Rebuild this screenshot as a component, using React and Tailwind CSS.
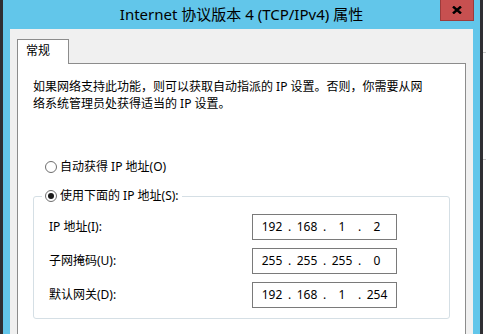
export default function App() {
  const rows = [
    { label: "IP 地址(I):", parts: ["192", "168", "1", "2"] },
    { label: "子网掩码(U):", parts: ["255", "255", "255", "0"] },
    { label: "默认网关(D):", parts: ["192", "168", "1", "254"] },
  ];

  return (
    <div className="w-[486px] h-[334px] overflow-hidden flex bg-white text-black font-['Noto_Sans','Noto_Sans_CJK_SC',sans-serif]">
      <div className="w-[3px] shrink-0 bg-[#2f2f33]" />

      <div className="w-[477px] shrink-0 flex flex-col bg-[#62c6ea]">
        {/* title bar */}
        <div className="relative h-[29px] shrink-0 flex items-center justify-center text-[15px] leading-none">
          <span>Internet 协议版本 4 (TCP/IPv4) 属性</span>
          <div className="absolute top-0 right-[6px] w-[34px] h-[21px] bg-[#c75050] border border-t-0 border-[#9c3b3b] flex items-center justify-center">
            <svg width="10" height="8" viewBox="0 0 10 8">
              <path d="M1 0.5 L9 7.5 M9 0.5 L1 7.5" stroke="#000" strokeWidth="2.4" />
            </svg>
          </div>
        </div>

        {/* dialog body */}
        <div className="mx-[7px] flex-1 bg-[#f0f0f0] pt-[10px] px-[7px] flex flex-col">
          <div className="relative z-10 w-[52px] h-[25px] -mb-px bg-white border border-b-0 border-[#8c8c8c] pl-[8px] pt-[3px] text-[12px] leading-[16px]">
            常规
          </div>

          <div className="h-[300px] bg-white border border-[#8c8c8c] px-[15px] pt-[14px] text-[12px]">
            <p className="leading-[17px] whitespace-nowrap">
              如果网络支持此功能，则可以获取自动指派的 IP 设置。否则，你需要从网
              <br />
              络系统管理员处获得适当的 IP 设置。
            </p>

            <div className="mt-[47px] pl-[12px] flex items-center gap-[3px] leading-[16px]">
              <span className="w-[12px] h-[12px] rounded-full border border-[#6e6e6e] bg-white" />
              <span>自动获得 IP 地址(O)</span>
            </div>

            <fieldset className="mt-[13px] border border-[#d5dfe5] rounded-[3px] pl-[8px] pb-[10px]">
              <legend className="px-[3px]">
                <span className="flex items-center gap-[3px] leading-[16px]">
                  <span className="w-[12px] h-[12px] rounded-full border border-[#6e6e6e] bg-white flex items-center justify-center">
                    <span className="w-[6px] h-[6px] rounded-full bg-[#1a1a1a]" />
                  </span>
                  <span>使用下面的 IP 地址(S):</span>
                </span>
              </legend>

              <div className="pt-[10px] flex flex-col gap-[8px]">
                {rows.map((r) => (
                  <div key={r.label} className="flex items-center h-[26px]">
                    <span className="w-[210px] pl-[7px]">{r.label}</span>
                    <div className="w-[145px] h-[26px] border border-[#7a7a7a] flex items-center pl-[4px]">
                      {r.parts.map((p, i) => (
                        <span key={i} className="flex">
                          {i > 0 && <span className="w-[5px] text-center">.</span>}
                          <span className="w-[30px] text-center">{p}</span>
                        </span>
                      ))}
                    </div>
                  </div>
                ))}
              </div>
            </fieldset>
          </div>
        </div>
      </div>

      <div className="w-[3px] shrink-0 bg-[#2f2f33]" />

      <div className="flex-1 flex flex-col">
        <div className="mt-[52px] h-px bg-[#cfcfcf]" />
        <div className="mt-[106px] h-px bg-[#cfcfcf]" />
      </div>
    </div>
  );
}
